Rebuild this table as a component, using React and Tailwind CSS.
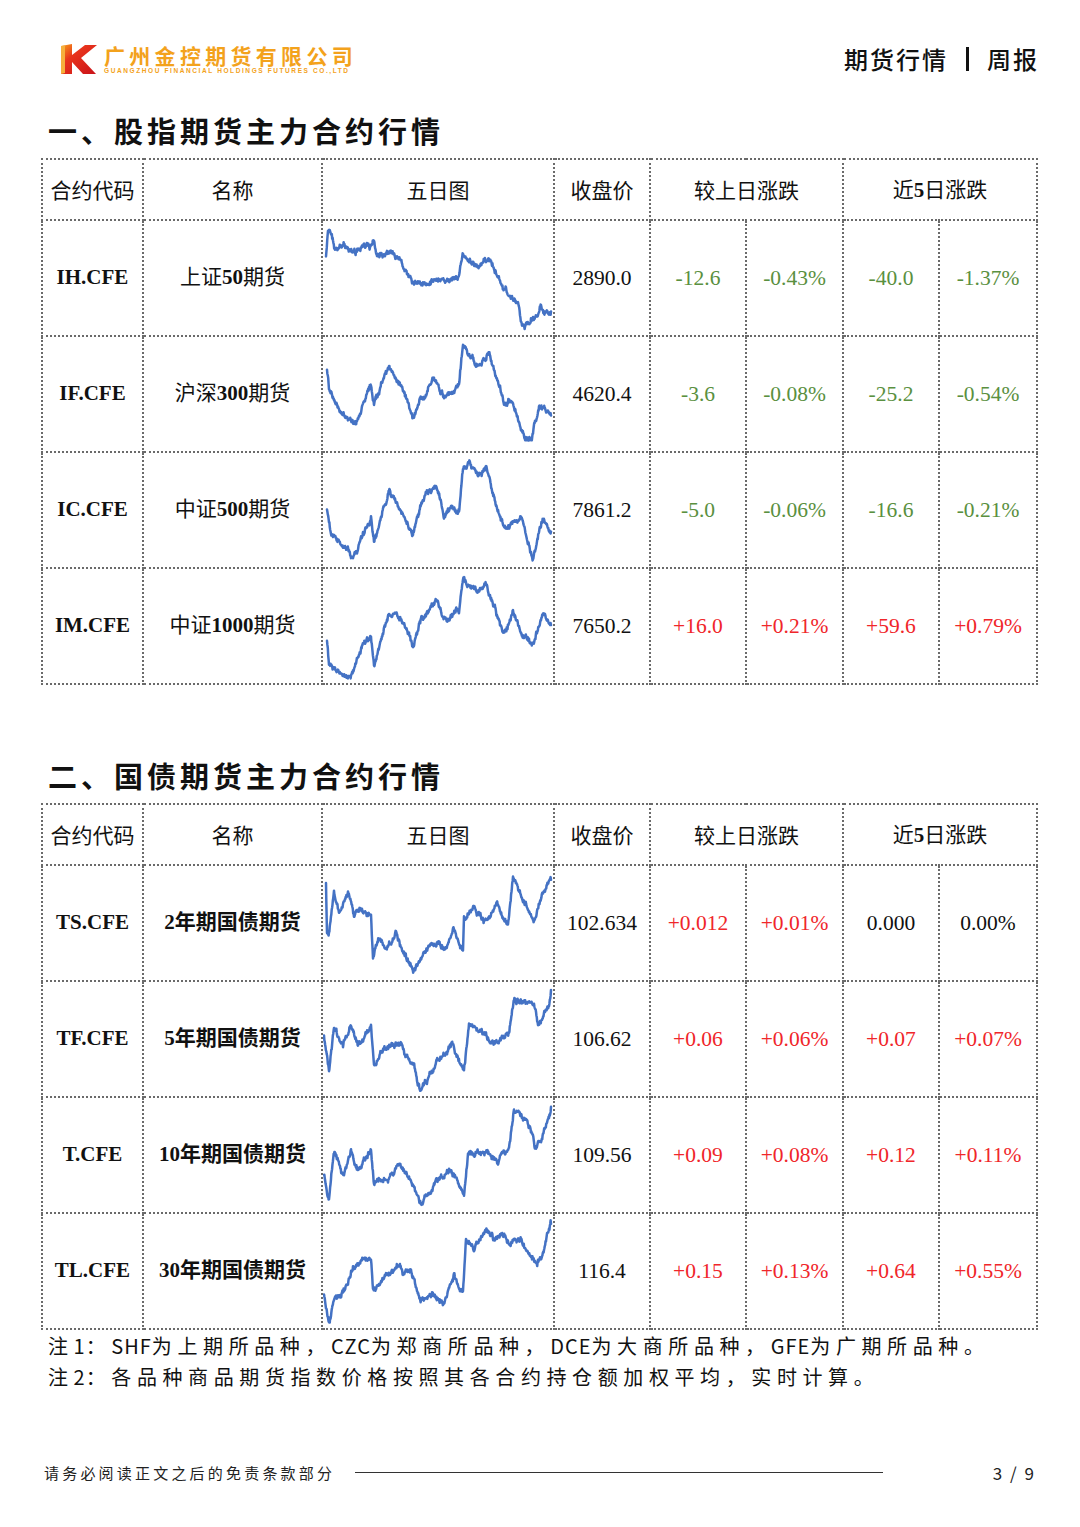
import React from 'react';

const SERIF = "font-['Liberation_Serif','Noto_Sans_CJK_SC',serif]";
const SANS = "font-['Noto_Sans_CJK_SC',sans-serif]";

// keypoints: [page x, y inside the 116px row]
const CURVES = {
  IH: [[325,36],[327,9],[330,12],[334,28],[345,27],[355,31],[365,26],[373,24],[376,38],[382,34],[390,33],[400,45],[413,69],[420,66],[435,63],[445,62],[457,60],[462,33],[470,42],[480,44],[487,39],[495,50],[507,73],[517,83],[521,105],[524,108],[530,103],[540,91],[545,94],[550,92]],
  IF: [[326,33],[328,50],[335,67],[352,90],[360,77],[370,48],[373,70],[388,30],[400,50],[413,82],[420,62],[433,42],[443,62],[458,48],[462,10],[477,30],[488,17],[503,67],[510,63],[523,100],[530,107],[538,73],[550,80]],
  IC: [[326,58],[330,83],[352,107],[370,68],[373,93],[388,37],[400,57],[412,83],[420,53],[435,32],[443,63],[458,55],[462,13],[468,10],[477,27],[485,17],[503,77],[520,67],[532,105],[542,68],[550,80]],
  IM: [[326,73],[328,97],[350,107],[363,73],[370,72],[373,100],[388,43],[408,63],[412,80],[420,52],[435,33],[443,53],[458,42],[462,8],[477,27],[485,15],[503,67],[512,43],[522,70],[532,78],[542,45],[550,57]],
  TS: [[325,18],[326,68],[328,68],[333,24],[338,46],[347,29],[353,48],[370,44],[372,93],[378,69],[385,86],[395,64],[402,89],[413,108],[423,89],[433,79],[445,86],[452,64],[462,86],[463,54],[473,41],[483,56],[497,38],[507,58],[512,9],[522,34],[533,53],[542,29],[550,14]],
  TF: [[323,55],[328,93],[333,50],[342,65],[350,45],[357,63],[370,48],[373,85],[383,72],[397,62],[410,83],[420,108],[435,85],[452,63],[463,93],[468,45],[483,53],[493,62],[508,48],[513,17],[533,27],[537,43],[548,25],[550,8]],
  T: [[323,76],[328,101],[333,54],[343,79],[350,54],[357,71],[370,54],[373,92],[385,84],[397,66],[412,86],[420,107],[433,89],[450,71],[463,94],[467,51],[483,54],[497,66],[508,54],[513,14],[528,26],[535,52],[542,37],[550,9]],
  TL: [[323,81],[328,108],[333,85],[347,76],[352,55],[370,45],[372,78],[383,65],[397,48],[402,58],[410,58],[420,85],[433,81],[443,95],[453,63],[462,81],[465,28],[473,35],[485,18],[493,26],[500,18],[508,31],[520,28],[535,50],[543,38],[550,10]],
};

function rng(seed) {
  let a = seed;
  return () => {
    a |= 0; a = (a + 0x6d2b79f5) | 0;
    let t = Math.imul(a ^ (a >>> 15), 1 | a);
    t = (t + Math.imul(t ^ (t >>> 7), 61 | t)) ^ t;
    return ((t ^ (t >>> 14)) >>> 0) / 4294967296;
  };
}

function buildPoints(keys, seed) {
  const rand = rng(seed);
  const pts = [];
  let slow = 0;
  for (let k = 0; k < keys.length - 1; k++) {
    const [x0, y0] = keys[k];
    const [x1, y1] = keys[k + 1];
    const steps = Math.max(1, Math.round((x1 - x0) / 0.4));
    for (let s = 0; s < steps; s++) {
      const t = s / steps;
      slow = slow * 0.9 + (rand() - 0.5) * 3.4;
      const fast = (rand() - 0.5) * 2.6;
      const y = y0 + (y1 - y0) * t + slow + fast;
      pts.push(`${(x0 + (x1 - x0) * t).toFixed(2)},${Math.min(112, Math.max(3, y)).toFixed(2)}`);
    }
  }
  const last = keys[keys.length - 1];
  pts.push(`${last[0]},${last[1]}`);
  return pts.join(' ');
}

function Spark({ id, seed }) {
  return (
    <svg viewBox="322 0 230 116" preserveAspectRatio="none" className="block w-full h-[114px]">
      <polyline points={buildPoints(CURVES[id], seed)} fill="none" stroke="#4472c4" strokeWidth="2.5" strokeLinejoin="round" strokeLinecap="round" />
    </svg>
  );
}

const GREEN = 'text-[#5a9040]';
const RED = 'text-[#f0262a]';
const BLACK = 'text-[#111]';

const stockRows = [
  { code: 'IH.CFE', name: '上证50期货', price: '2890.0', vals: ['-12.6', '-0.43%', '-40.0', '-1.37%'], col: [GREEN, GREEN, GREEN, GREEN], bold: false },
  { code: 'IF.CFE', name: '沪深300期货', price: '4620.4', vals: ['-3.6', '-0.08%', '-25.2', '-0.54%'], col: [GREEN, GREEN, GREEN, GREEN], bold: false },
  { code: 'IC.CFE', name: '中证500期货', price: '7861.2', vals: ['-5.0', '-0.06%', '-16.6', '-0.21%'], col: [GREEN, GREEN, GREEN, GREEN], bold: false },
  { code: 'IM.CFE', name: '中证1000期货', price: '7650.2', vals: ['+16.0', '+0.21%', '+59.6', '+0.79%'], col: [RED, RED, RED, RED], bold: false },
];

const bondRows = [
  { code: 'TS.CFE', name: '2年期国债期货', price: '102.634', vals: ['+0.012', '+0.01%', '0.000', '0.00%'], col: [RED, RED, BLACK, BLACK], bold: true },
  { code: 'TF.CFE', name: '5年期国债期货', price: '106.62', vals: ['+0.06', '+0.06%', '+0.07', '+0.07%'], col: [RED, RED, RED, RED], bold: true },
  { code: 'T.CFE', name: '10年期国债期货', price: '109.56', vals: ['+0.09', '+0.08%', '+0.12', '+0.11%'], col: [RED, RED, RED, RED], bold: true },
  { code: 'TL.CFE', name: '30年期国债期货', price: '116.4', vals: ['+0.15', '+0.13%', '+0.64', '+0.55%'], col: [RED, RED, RED, RED], bold: true },
];

const cell = 'border-2 border-dotted border-[#6a6a6a] text-center align-middle p-0';

function Name({ text, bold }) {
  // digits are Times bold, Chinese regular (or bold in bond table)
  const parts = text.split(/(\d+)/).filter(Boolean);
  return (
    <span className={`${SERIF} text-[21px] text-[#111] whitespace-nowrap`}>
      {parts.map((p, i) =>
        /\d/.test(p) ? <b key={i} className="font-bold">{p}</b> : <span key={i} className={bold ? 'font-bold' : 'font-normal'}>{p}</span>
      )}
    </span>
  );
}

function QuoteTable({ rows, seedBase }) {
  const head = `${cell} ${SANS} text-[21px] font-normal text-[#111]`;
  return (
    <table className="w-full border-collapse table-fixed">
      <colgroup>
        <col className="w-[101px]" />
        <col className="w-[179px]" />
        <col className="w-[232px]" />
        <col className="w-[96px]" />
        <col className="w-[96px]" />
        <col className="w-[97px]" />
        <col className="w-[96px]" />
        <col className="w-[98px]" />
      </colgroup>
      <thead>
        <tr className="h-[61px]">
          {['合约代码', '名称', '五日图', '收盘价'].map((h) => (
            <th key={h} className={head}>{h}</th>
          ))}
          <th colSpan={2} className={head}>较上日涨跌</th>
          <th colSpan={2} className={head}>
            近<span className={`${SERIF} font-bold`}>5</span>日涨跌
          </th>
        </tr>
      </thead>
      <tbody>
        {rows.map((r, i) => (
          <tr key={r.code} className="h-[116px]">
            <td className={`${cell} ${SERIF} text-[21px] font-bold text-[#111]`}>{r.code}</td>
            <td className={cell}><Name text={r.name} bold={r.bold} /></td>
            <td className={cell}><Spark id={r.code.replace('.CFE', '')} seed={seedBase + i * 17} /></td>
            <td className={`${cell} ${SERIF} text-[21.5px] text-[#111]`}>{r.price}</td>
            {r.vals.map((v, j) => (
              <td key={j} className={`${cell} ${SERIF} text-[21.5px] ${r.col[j]}`}>{v}</td>
            ))}
          </tr>
        ))}
      </tbody>
    </table>
  );
}

function Note({ parts }) {
  // Chinese characters are spread out, latin letters stay tight
  return (
    <p>
      {parts.map((p, i) =>
        /^[A-Z0-9]+$/.test(p)
          ? <span key={i} className="tracking-[1px]">{p}</span>
          : <span key={i} className="tracking-[5.6px]">{p}</span>
      )}
    </p>
  );
}

function Logo() {
  return (
    <div className="flex items-center gap-[6px] ml-[19px]">
      <svg width="38" height="31" viewBox="0 0 38 31">
        <defs>
          <linearGradient id="kg" x1="0" y1="0" x2="1" y2="1">
            <stop offset="0" stopColor="#f7a11a" />
            <stop offset="0.35" stopColor="#e8341c" />
            <stop offset="1" stopColor="#c9121a" />
          </linearGradient>
        </defs>
        <polygon points="1,2 12,0 12,11 25,1 37,1 21,14 36,30 23,30 12,18 12,30 1,30" fill="url(#kg)" />
        <polygon points="1,2 5,1.5 5,29 1,30" fill="#f6b03c" />
      </svg>
      <div className="flex flex-col">
        <span className={`${SANS} text-[21px] leading-[22px] font-bold tracking-[4.3px] text-[#f3a21c]`}>广州金控期货有限公司</span>
        <span className="font-['Liberation_Sans',sans-serif] text-[6.5px] leading-[8px] font-bold tracking-[1.6px] text-[#f3a21c] mt-[1px] whitespace-nowrap">
          GUANGZHOU FINANCIAL HOLDINGS FUTURES CO.,LTD
        </span>
      </div>
    </div>
  );
}

export default function App() {
  return (
    <div className="w-[1080px] h-[1527px] bg-white pl-[41px] pr-[44px] pt-[43px]">
      <div className="flex items-center justify-between h-[32px]">
        <Logo />
        <div className={`${SANS} -mr-[3px] text-[24px] font-medium text-[#111] tracking-[2px] flex items-center`}>
          <span>期货行情</span>
          <span className="mx-[18px] inline-block w-[3px] h-[24px] bg-[#111]"></span>
          <span>周报</span>
        </div>
      </div>

      <h1 className={`${SANS} mt-[35px] ml-[7px] text-[29px] leading-[40px] font-bold tracking-[4px] text-[#111]`}>一、股指期货主力合约行情</h1>
      <div className="mt-[8px]">
        <QuoteTable rows={stockRows} seedBase={11} />
      </div>

      <h1 className={`${SANS} mt-[70px] ml-[7px] text-[29px] leading-[40px] font-bold tracking-[4px] text-[#111]`}>二、国债期货主力合约行情</h1>
      <div className="mt-[8px]">
        <QuoteTable rows={bondRows} seedBase={91} />
      </div>

      <div className={`${SANS} ml-[7px] mt-[0px] text-[20px] leading-[31px] text-[#111]`}>
        <Note parts={['注', '1', '：', 'SHF', '为上期所品种，', 'CZC', '为郑商所品种，', 'DCE', '为大商所品种，', 'GFE', '为广期所品种。']} />
        <Note parts={['注', '2', '：各品种商品期货指数价格按照其各合约持仓额加权平均，实时计算。']} />
      </div>

      <div className="mt-[68px] flex items-center">
        <span className={`${SANS} ml-[3px] text-[15px] tracking-[3.2px] text-[#222]`}>请务必阅读正文之后的免责条款部分</span>
        <span className="ml-[20px] w-[528px] h-px bg-[#333]"></span>
        <span className="flex-1"></span>
        <span className={`${SANS} text-[17px] text-[#222] tracking-[2px]`}>3 / 9</span>
      </div>
    </div>
  );
}
